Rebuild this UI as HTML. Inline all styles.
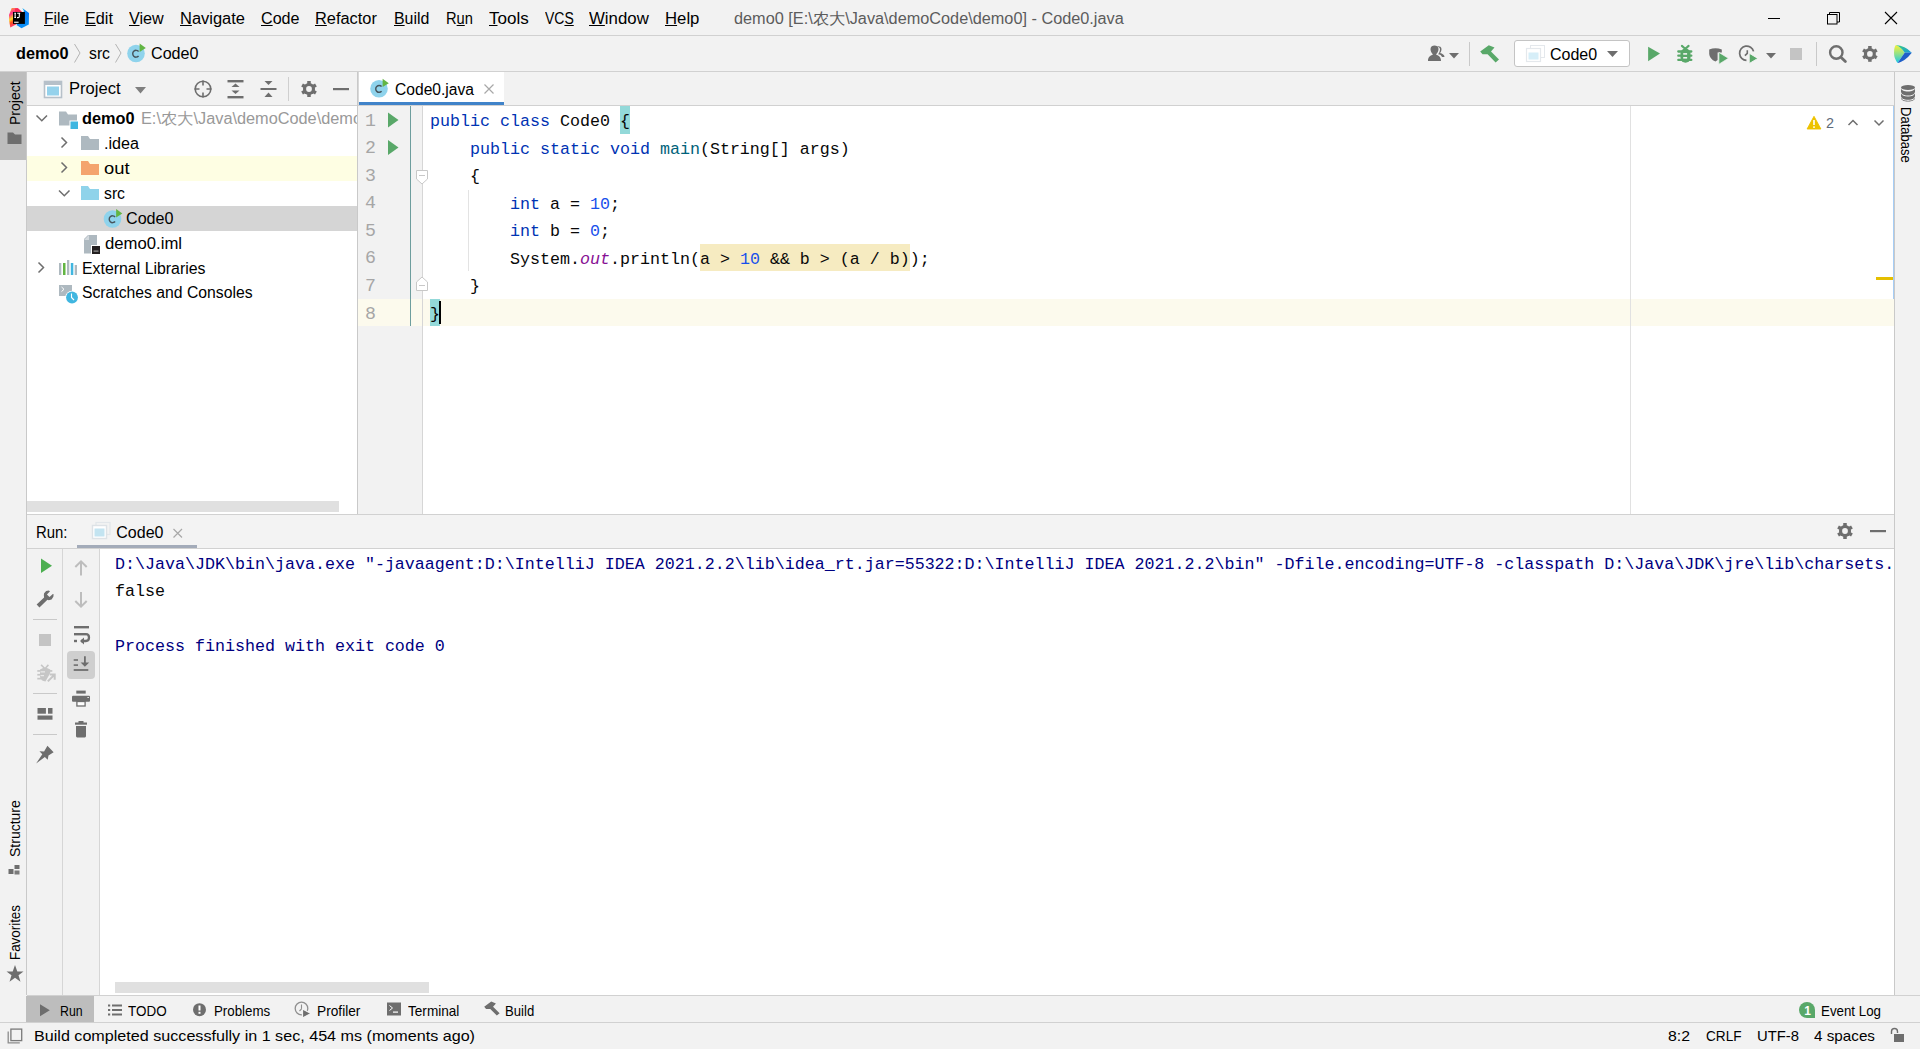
<!DOCTYPE html>
<html><head><meta charset="utf-8"><style>*{margin:0;padding:0;box-sizing:border-box}
html,body{width:1920px;height:1049px;overflow:hidden;background:#f2f2f2}
body{position:relative;font-family:"Liberation Sans",sans-serif;color:#000}
.a{position:absolute;display:block;overflow:visible}
.t{position:absolute;white-space:pre}
.vt{white-space:pre;color:#000}
.code{position:absolute;white-space:pre;font-family:"Liberation Mono",monospace;font-size:16.67px;line-height:27.57px;color:#080808}
u{text-decoration:underline;text-decoration-thickness:1px;text-underline-offset:1px}
</style></head><body>
<div class="a" style="left:0px;top:35px;width:1920px;height:1px;background:#d1d1d1;"></div>
<svg class="a" style="left:5px;top:4px" width="30" height="28" viewBox="0 0 30 28">
<defs><linearGradient id="lgb" x1="0" y1="0" x2="0.3" y2="1">
<stop offset="0" stop-color="#07c3f2"/><stop offset="0.45" stop-color="#087cfa"/><stop offset="1" stop-color="#0a8ff5"/></linearGradient>
<linearGradient id="lgp" x1="0" y1="0" x2="0.4" y2="1">
<stop offset="0" stop-color="#fcb827"/><stop offset="0.3" stop-color="#ff318c"/><stop offset="0.55" stop-color="#fcd927"/><stop offset="0.7" stop-color="#fc521f"/><stop offset="1" stop-color="#ff318c"/></linearGradient></defs>
<polygon points="17.3,4 24,9.1 23.8,20.5 16.5,24.2 11.5,21 19,7" fill="url(#lgb)"/>
<polygon points="6.7,4 12.5,4.1 17.5,8.5 11,20.5 5.3,23.5 4.2,17 4,11" fill="url(#lgp)"/>
<polygon points="10,4.5 13,4.2 17.5,8.5 10,10" fill="#fe2857"/>
<rect x="8" y="8" width="11.9" height="11.9" fill="#000"/>
<rect x="9.1" y="17.7" width="4.5" height="1.1" fill="#fff"/>
<path d="M9.3,9.2 H11 M10.15,9.2 V13.5 M9.3,13.5 H11 M12.2,9.2 H15.2 M14.3,9.2 V12.4 Q14.3,13.6 13.2,13.6 H12" fill="none" stroke="#fff" stroke-width="1.1"/>
</svg>
<svg class="a" style="left:1760px;top:0px" width="160" height="35" viewBox="0 0 160 35">
<rect x="8" y="18" width="12" height="1" fill="#000"/>
<rect x="67.5" y="14.5" width="9.5" height="9.5" fill="none" stroke="#000" stroke-width="1"/>
<path d="M69.5,14.5 V12.5 H79.5 V22 H77" fill="none" stroke="#000" stroke-width="1"/>
<path d="M125,12 L137,24 M137,12 L125,24" stroke="#000" stroke-width="1.1"/>
</svg>
<div class="a" style="left:0px;top:71px;width:1920px;height:1px;background:#d1d1d1;"></div>
<svg class="a" style="left:70px;top:40px" width="60" height="28" viewBox="0 0 60 28"><path d="M4.5,4 L10,13 L4.5,22.5" fill="none" stroke="#b4b4b4" stroke-width="1"/>
<path d="M45.5,4 L51,13 L45.5,22.5" fill="none" stroke="#b4b4b4" stroke-width="1"/></svg>
<svg class="a" style="left:120px;top:36px" width="40" height="36" viewBox="0 0 40 36"><circle cx="16" cy="17.5" r="8.8" fill="#8fd3ec"/>
<path d="M18.6,15.4 A3.4,3.4 0 1 0 18.6,20.1" fill="none" stroke="#46545c" stroke-width="1.45"/>
<polygon points="19.6,7.5 25.8,12.0 19.6,15.9" fill="#62b543"/></svg>
<svg class="a" style="left:1420px;top:36px" width="500" height="36" viewBox="0 0 500 36">
<path d="M8,25 C8,21 10,19.5 13,18.5 C11.5,17 10.5,15 10.5,13 C10.5,10.5 12.5,9.5 14.5,9.5 C16.5,9.5 18.5,10.5 18.5,13 C18.5,15 17.5,17 16,18.5 C19,19.5 21,21 21,25 Z" fill="#6e6e6e"/>
<path d="M17,10.5 C18.5,10 21.5,10.5 21.5,13 C21.5,14.5 21,16 20,17 C22.5,17.5 24.5,19 24.5,21 L22,21 C21.5,19.5 20,18.5 18,18.3 C19.3,16.8 20,15 20,13.2 C20,12 18.8,11 17,10.5Z" fill="#6e6e6e"/>
<polygon points="29,17 39,17 34,22.5" fill="#6e6e6e"/>
<rect x="49" y="6" width="1" height="24" fill="#c9c9c9"/>
<polygon points="60.2,15.5 68.8,9.2 74.5,11.5 71,15.5 79,23.5 75.6,26.4 67.6,18.3 62.5,18.3" fill="#59a869"/>
<polygon points="228.1,10.85 240,17.6 228.1,25.2" fill="#59a869"/>
</svg>
<div class="a" style="left:1514px;top:40px;width:116px;height:27px;background:#fff;border:1px solid #c4c4c4;border-radius:3px"></div>
<svg class="a" style="left:1520px;top:40px" width="110" height="27" viewBox="0 0 110 27">
<rect x="10.5" y="5.5" width="14" height="12" fill="#fff" stroke="#e4e8ec" stroke-width="1"/>
<rect x="6.5" y="8.5" width="14" height="13" fill="#fff" stroke="#e4e8ec" stroke-width="1.2"/>
<rect x="8.5" y="12.5" width="10" height="7" fill="#d6eef8"/>
<polygon points="87,11 98,11 92.5,17" fill="#6e6e6e"/>
</svg>
<svg class="a" style="left:1670px;top:36px" width="250" height="36" viewBox="0 0 250 36">
<rect x="10.5" y="12.5" width="10" height="14.2" rx="5" fill="#59a869"/>
<path d="M8.3,15.5 H21.3 M8.3,19.7 H21.3 M8.3,23.9 H21.3" stroke="#59a869" stroke-width="2.3" stroke-linecap="round"/>
<path d="M11.9,9.9 L14.9,12.5 M18.6,9.9 L15.6,12.5" stroke="#59a869" stroke-width="2.1" stroke-linecap="round"/>
<rect x="13.2" y="17.1" width="3.9" height="1.6" fill="#f2f2f2"/>
<rect x="13.2" y="21" width="3.9" height="1.6" fill="#f2f2f2"/>
<path d="M39.2,13.6 Q45.5,10.9 51.8,13.6 V16.6 H47.6 V24 L45.5,25.6 Q39.6,23 39.2,18 Z" fill="#6e6e6e"/>
<polygon points="48.9,16.4 58.4,22.3 48.9,28.2" fill="#59a869" stroke="#f2f2f2" stroke-width="0.7"/>
<path d="M83.56,15.36 A7.1,7.1 0 1 0 76.45,24.3" fill="none" stroke="#6e6e6e" stroke-width="1.7"/>
<path d="M77.3,14.2 V17.3 L74.9,19.6" fill="none" stroke="#6e6e6e" stroke-width="1.6"/>
<polygon points="79.2,17.2 87.9,22.4 79.2,27.6" fill="#59a869" stroke="#f2f2f2" stroke-width="1"/>
<polygon points="96,17 106,17 101,22.5" fill="#6e6e6e"/>
<rect x="120" y="12" width="12" height="12" fill="#c4c4c4"/>
<rect x="146" y="6" width="1" height="24" fill="#c9c9c9"/>
<circle cx="166.3" cy="16.5" r="6.2" fill="none" stroke="#6e6e6e" stroke-width="2.4"/>
<path d="M171.2,21.4 L175.4,25.6" stroke="#6e6e6e" stroke-width="2.8" stroke-linecap="round"/>
</svg>
<svg class="a" style="left:1850px;top:36px" width="70" height="36" viewBox="0 0 70 36"><circle cx="19.9" cy="17.9" r="6.00" fill="#6e6e6e"/><rect x="18.16" y="10.00" width="3.48" height="7.90" fill="#6e6e6e" transform="rotate(0 19.9 17.9)"/><rect x="18.16" y="10.00" width="3.48" height="7.90" fill="#6e6e6e" transform="rotate(60 19.9 17.9)"/><rect x="18.16" y="10.00" width="3.48" height="7.90" fill="#6e6e6e" transform="rotate(120 19.9 17.9)"/><rect x="18.16" y="10.00" width="3.48" height="7.90" fill="#6e6e6e" transform="rotate(180 19.9 17.9)"/><rect x="18.16" y="10.00" width="3.48" height="7.90" fill="#6e6e6e" transform="rotate(240 19.9 17.9)"/><rect x="18.16" y="10.00" width="3.48" height="7.90" fill="#6e6e6e" transform="rotate(300 19.9 17.9)"/><circle cx="19.9" cy="17.9" r="2.84" fill="#f2f2f2"/>
<defs><linearGradient id="tb1" x1="0" y1="0" x2="0" y2="1"><stop offset="0" stop-color="#f8f236"/><stop offset="0.5" stop-color="#8fe08a"/><stop offset="1" stop-color="#18c9ea"/></linearGradient>
<linearGradient id="tb2" x1="0" y1="0" x2="1" y2="1"><stop offset="0" stop-color="#3ed07a"/><stop offset="1" stop-color="#1597e0"/></linearGradient></defs>
<path d="M45.9,9.1 Q52,12 54.7,16.8 Q51,22 47.6,26.9 Q44,22.5 44,17 Q44,11 45.9,9.1 Z" fill="url(#tb1)"/>
<path d="M45.9,9.1 Q55,9.5 61.8,16.8 H54.7 Q52,12 45.9,9.1 Z" fill="url(#tb2)"/>
<path d="M54.7,16.8 H61.8 Q55,25.5 47.6,26.9 Q51,22 54.7,16.8 Z" fill="#1f5fc8"/>
</svg>
<div class="a" style="left:0px;top:72px;width:26px;height:88px;background:#bdbdbd;"></div>
<div class="a" style="left:26px;top:72px;width:1px;height:924px;background:#c9c9c9;"></div>
<svg class="a" style="left:0px;top:72px" width="26" height="930" viewBox="0 0 26 930">
<path d="M7.5,60.5 H13 L15,62.5 H21.5 V72 H7.5 Z" fill="#6e6e6e"/>
<rect x="8.5" y="797" width="5" height="5" fill="#6e6e6e"/>
<rect x="14.5" y="793" width="5" height="4" fill="#6e6e6e"/>
<rect x="14.5" y="798.5" width="5" height="4" fill="#6e6e6e" opacity="0.9"/>
<polygon points="15,893 17.3,899.5 23.5,899.5 18.5,903.3 20.5,909.8 15,905.8 9.5,909.8 11.5,903.3 6.5,899.5 12.7,899.5" fill="#6e6e6e"/>
</svg>
<div class="t vt" style="left:7.5px;top:124.5px;transform:rotate(-90deg);transform-origin:0 0;font-size:14px;line-height:14px">Project</div>
<div class="t vt" style="left:8px;top:857px;transform:rotate(-90deg);transform-origin:0 0;font-size:14px;line-height:14px">Structure</div>
<div class="t vt" style="left:8px;top:960px;transform:rotate(-90deg) scaleX(0.955);transform-origin:0 0;font-size:14px;line-height:14px">Favorites</div>
<div class="a" style="left:27px;top:106px;width:330px;height:408px;background:#fff;"></div>
<div class="a" style="left:27px;top:105px;width:330px;height:1px;background:#d1d1d1;"></div>
<div class="a" style="left:357px;top:72px;width:1px;height:442px;background:#c9c9c9;"></div>
<div class="a" style="left:358px;top:72px;width:1px;height:442px;background:#d9d9d9;"></div>
<svg class="a" style="left:27px;top:72px" width="330" height="34" viewBox="0 0 330 34">
<rect x="17.5" y="9.5" width="17" height="16" fill="#fff" stroke="#b6c0c9" stroke-width="1.6"/>
<rect x="17" y="9" width="18" height="4" fill="#b6c0c9"/>
<rect x="20" y="14.5" width="12" height="9" fill="#95d2ec"/>
<polygon points="108,15 119,15 113.5,21.5" fill="#7f7f7f"/>
<circle cx="176" cy="17" r="7.8" fill="none" stroke="#6e6e6e" stroke-width="1.6"/>
<path d="M167.5,17 H172.5 M179.5,17 H184.5 M176,8.5 V13.5 M176,20.5 V25.5" stroke="#6e6e6e" stroke-width="1.6"/>
<rect x="200.5" y="8" width="16" height="2.4" fill="#6e6e6e"/>
<rect x="200.5" y="24" width="16" height="2.4" fill="#6e6e6e"/>
<polygon points="204.5,15 212.5,15 208.5,11.5" fill="#6e6e6e"/>
<polygon points="204.5,18.5 212.5,18.5 208.5,22" fill="#6e6e6e"/>
<rect x="233.5" y="16" width="16" height="2" fill="#6e6e6e"/>
<polygon points="237.5,9 245.5,9 241.5,13" fill="#6e6e6e"/>
<polygon points="237.5,25 245.5,25 241.5,20.5" fill="#6e6e6e"/>
<rect x="261" y="5" width="1" height="24" fill="#cfcfcf"/>
<rect x="306" y="16" width="16" height="2.2" fill="#6e6e6e"/>
<circle cx="282" cy="17" r="6.08" fill="#6e6e6e"/><rect x="280.24" y="9.00" width="3.52" height="8.00" fill="#6e6e6e" transform="rotate(0 282 17)"/><rect x="280.24" y="9.00" width="3.52" height="8.00" fill="#6e6e6e" transform="rotate(60 282 17)"/><rect x="280.24" y="9.00" width="3.52" height="8.00" fill="#6e6e6e" transform="rotate(120 282 17)"/><rect x="280.24" y="9.00" width="3.52" height="8.00" fill="#6e6e6e" transform="rotate(180 282 17)"/><rect x="280.24" y="9.00" width="3.52" height="8.00" fill="#6e6e6e" transform="rotate(240 282 17)"/><rect x="280.24" y="9.00" width="3.52" height="8.00" fill="#6e6e6e" transform="rotate(300 282 17)"/><circle cx="282" cy="17" r="2.88" fill="#f2f2f2"/></svg>
<div class="a" style="left:27px;top:156px;width:330px;height:25px;background:#fefee3;"></div>
<div class="a" style="left:27px;top:206px;width:330px;height:25px;background:#d5d5d5;"></div>
<svg class="a" style="left:27px;top:106px" width="330" height="200" viewBox="0 0 330 200">
<path d="M9.5,9.5 L14.8,14.8 L20,9.5" fill="none" stroke="#6e6e6e" stroke-width="1.5"/>
<path d="M32,5.5 H39 L41,8.5 H50 V19.5 H32 Z" fill="#aeb9c0"/>
<rect x="42.5" y="14.5" width="9" height="9" fill="#fff"/>
<rect x="43.5" y="15.5" width="7.5" height="7.5" fill="#40b6e0"/>
<path d="M34.5,31.5 L39.5,36.5 L34.5,41.5" fill="none" stroke="#6e6e6e" stroke-width="1.5"/>
<path d="M54,30 H61 L63,33 H72 V44 H54 Z" fill="#aeb9c0"/>
<path d="M34.5,56.5 L39.5,61.5 L34.5,66.5" fill="none" stroke="#6e6e6e" stroke-width="1.5"/>
<path d="M54,55 H61 L63,58 H72 V69 H54 Z" fill="#f4a46e"/>
<path d="M32,84.5 L37.3,89.8 L42.5,84.5" fill="none" stroke="#6e6e6e" stroke-width="1.5"/>
<path d="M54,80 H61 L63,83 H72 V94 H54 Z" fill="#8fd3ea"/>
<path d="M57,129 H70 V140 H64 V147.5 H57 Z" fill="#aeb9c0"/>
<path d="M56.5,128.5 H61.5 L56.5,133.5 Z" fill="#fff"/>
<polygon points="57,134 62,129 62,134" fill="#d3d9de"/>
<rect x="64" y="139" width="10" height="10" fill="#fff"/>
<rect x="65" y="140" width="8" height="8" fill="#231f20"/>
<rect x="66.5" y="144.5" width="5" height="1.2" fill="#9a9a9a"/>
<path d="M11.5,156.5 L16.5,161.5 L11.5,166.5" fill="none" stroke="#6e6e6e" stroke-width="1.5"/>
<rect x="32" y="157" width="2.3" height="12" fill="#aeb9c0"/>
<rect x="36" y="157" width="2.5" height="12" fill="#62b543"/>
<rect x="40" y="154" width="2.3" height="15" fill="#aeb9c0"/>
<rect x="43.8" y="157" width="2.5" height="12" fill="#40b6e0"/>
<rect x="47.7" y="159" width="2.3" height="10" fill="#aeb9c0"/>
<rect x="32" y="179" width="13" height="11" fill="#aeb9c0"/>
<path d="M34.5,181 L37,183.3 L34.5,185.6" fill="none" stroke="#fff" stroke-width="1"/>
<circle cx="45" cy="191.5" r="6.8" fill="#fff"/>
<circle cx="45" cy="191.5" r="5.9" fill="#40b6e0"/>
<path d="M44.5,187.5 V191.5 L47,194" fill="none" stroke="#fff" stroke-width="1.1"/>
</svg>
<svg class="a" style="left:100px;top:200px" width="40" height="40" viewBox="0 0 40 40"><circle cx="12.5" cy="19" r="8.8" fill="#8fd3ec"/>
<path d="M15.1,16.9 A3.4,3.4 0 1 0 15.1,21.6" fill="none" stroke="#46545c" stroke-width="1.45"/>
<polygon points="16.1,9 22.3,13.5 16.1,17.4" fill="#62b543"/></svg>
<div class="a" style="left:27px;top:500px;width:314px;height:13px;background:#fff;"></div>
<div class="a" style="left:27px;top:501px;width:312px;height:11px;background:#e0e0e0;"></div>
<div class="a" style="left:359px;top:72px;width:145px;height:33px;background:#fff;"></div>
<div class="a" style="left:359px;top:102px;width:145px;height:3px;background:#4083c9;"></div>
<div class="a" style="left:358px;top:105px;width:1536px;height:1px;background:#d1d1d1;"></div>
<svg class="a" style="left:360px;top:72px" width="144" height="33" viewBox="0 0 144 33"><circle cx="19" cy="16.7" r="8.8" fill="#8fd3ec"/>
<path d="M21.6,14.6 A3.4,3.4 0 1 0 21.6,19.3" fill="none" stroke="#46545c" stroke-width="1.45"/>
<polygon points="22.6,6.699999999999999 28.8,11.2 22.6,15.1" fill="#62b543"/>
<path d="M124.5,12.5 L133.5,21.5 M133.5,12.5 L124.5,21.5" stroke="#a8a8a8" stroke-width="1.2"/></svg>
<div class="a" style="left:358px;top:106px;width:1536px;height:408px;background:#fff;"></div>
<div class="a" style="left:358px;top:106px;width:64px;height:408px;background:#f2f2f2;"></div>
<div class="a" style="left:358px;top:299px;width:1536px;height:27px;background:#fcfaed;"></div>
<div class="a" style="left:410px;top:106px;width:1px;height:220px;background:#6e9e9e;"></div>
<div class="a" style="left:422px;top:106px;width:1px;height:408px;background:#d6d6d6;"></div>
<div class="a" style="left:1630px;top:106px;width:1px;height:408px;background:#e1e1e1;"></div>
<div class="a" style="left:1893px;top:106px;width:1px;height:193px;background:#a6cdf5;"></div>
<div class="a" style="left:1876px;top:276.5px;width:17px;height:3px;background:#e5bf00;"></div>
<div class="a" style="left:620px;top:106px;width:10px;height:27.5px;background:#93d9d9;"></div>
<div class="a" style="left:430px;top:299px;width:10px;height:27px;background:#93d9d9;"></div>
<div class="a" style="left:700px;top:244px;width:210px;height:27px;background:#f6ebc1;"></div>
<div class="a" style="left:439px;top:301px;width:2px;height:23px;background:#000;"></div>
<div class="a" style="left:468px;top:190px;width:1px;height:81px;background:#e3e3e3;"></div>
<svg class="a" style="left:358px;top:106px" width="64" height="220" viewBox="0 0 64 220">
<polygon points="30,6.5 40.5,14 30,21.5" fill="#59a869"/>
<polygon points="30,34 40.5,41.5 30,49" fill="#59a869"/>
</svg>
<svg class="a" style="left:410px;top:160px" width="24" height="140" viewBox="0 0 24 140">
<path d="M6.5,10.5 H17.5 V19 L12,24 L6.5,19 Z" fill="#fff" stroke="#c8c8c8" stroke-width="1"/>
<rect x="9" y="15" width="6" height="1" fill="#c8c8c8"/>
<path d="M6.5,130.5 H17.5 V122 L12,117 L6.5,122 Z" fill="#fff" stroke="#c8c8c8" stroke-width="1"/>
<rect x="9" y="125" width="6" height="1" fill="#c8c8c8"/>
</svg>
<div class="code" style="left:430px;top:108.00px"><span style="color:#0033b3">public class </span><span style="color:#080808">Code0 </span><span style="color:#080808">{</span></div>
<div class="code" style="left:365px;top:107.60px;color:#a6a6a6;font-size:18.2px;line-height:27.57px">1</div>
<div class="code" style="left:430px;top:135.57px"><span style="color:#080808">    </span><span style="color:#0033b3">public static void </span><span style="color:#00627a">main</span><span style="color:#080808">(String[] args)</span></div>
<div class="code" style="left:365px;top:135.17px;color:#a6a6a6;font-size:18.2px;line-height:27.57px">2</div>
<div class="code" style="left:430px;top:163.14px"><span style="color:#080808">    {</span></div>
<div class="code" style="left:365px;top:162.74px;color:#a6a6a6;font-size:18.2px;line-height:27.57px">3</div>
<div class="code" style="left:430px;top:190.71px"><span style="color:#080808">        </span><span style="color:#0033b3">int </span><span style="color:#080808">a = </span><span style="color:#1750eb">10</span><span style="color:#080808">;</span></div>
<div class="code" style="left:365px;top:190.31px;color:#a6a6a6;font-size:18.2px;line-height:27.57px">4</div>
<div class="code" style="left:430px;top:218.28px"><span style="color:#080808">        </span><span style="color:#0033b3">int </span><span style="color:#080808">b = </span><span style="color:#1750eb">0</span><span style="color:#080808">;</span></div>
<div class="code" style="left:365px;top:217.88px;color:#a6a6a6;font-size:18.2px;line-height:27.57px">5</div>
<div class="code" style="left:430px;top:245.85px"><span style="color:#080808">        System.</span><span style="color:#871094;font-style:italic">out</span><span style="color:#080808">.println(a &gt; </span><span style="color:#1750eb">10</span><span style="color:#080808"> &amp;&amp; b &gt; (a / b));</span></div>
<div class="code" style="left:365px;top:245.45px;color:#a6a6a6;font-size:18.2px;line-height:27.57px">6</div>
<div class="code" style="left:430px;top:273.42px"><span style="color:#080808">    }</span></div>
<div class="code" style="left:365px;top:273.02px;color:#a6a6a6;font-size:18.2px;line-height:27.57px">7</div>
<div class="code" style="left:430px;top:300.99px"><span style="color:#080808">}</span></div>
<div class="code" style="left:365px;top:300.59px;color:#a6a6a6;font-size:18.2px;line-height:27.57px">8</div>
<svg class="a" style="left:1800px;top:110px" width="95" height="24" viewBox="0 0 95 24">
<polygon points="14,6.3 20.9,19 7.1,19" fill="#edc200" stroke="#edc200" stroke-width="0.9" stroke-linejoin="round"/>
<rect x="13.2" y="10" width="1.6" height="5" fill="#fff"/>
<rect x="13.2" y="16.3" width="1.6" height="1.6" fill="#fff"/>
<path d="M48.5,15 L53,10.5 L57.5,15" fill="none" stroke="#6e6e6e" stroke-width="1.5"/>
<path d="M74.5,10.5 L79,15 L83.5,10.5" fill="none" stroke="#6e6e6e" stroke-width="1.5"/>
</svg>
<div class="a" style="left:1894px;top:72px;width:1px;height:924px;background:#c9c9c9;"></div>
<svg class="a" style="left:1895px;top:72px" width="25" height="40" viewBox="0 0 25 40">
<ellipse cx="13" cy="15.5" rx="7" ry="2.6" fill="#6e6e6e"/>
<path d="M6,16 V26 C6,28 9,29.5 13,29.5 C17,29.5 20,28 20,26 V16 C20,18 17,19.5 13,19.5 C9,19.5 6,18 6,16Z" fill="#6e6e6e"/>
<path d="M6,20.5 C6,22.5 9,24 13,24 C17,24 20,22.5 20,20.5 M6,24.8 C6,26.8 9,28.3 13,28.3 C17,28.3 20,26.8 20,24.8" fill="none" stroke="#f2f2f2" stroke-width="1"/>
</svg>
<div class="t vt" style="left:1912.7px;top:106.5px;transform:rotate(90deg) scaleX(0.93);transform-origin:0 0;font-size:14px;line-height:14px">Database</div>
<div class="a" style="left:27px;top:514px;width:1867px;height:1px;background:#d1d1d1;"></div>
<div class="a" style="left:27px;top:515px;width:1867px;height:33px;background:#f3f3f3;"></div>
<div class="a" style="left:27px;top:548px;width:1867px;height:1px;background:#d1d1d1;"></div>
<div class="a" style="left:76.5px;top:545px;width:120px;height:3px;background:#a3abb9;"></div>
<svg class="a" style="left:88px;top:518px" width="100" height="26" viewBox="0 0 100 26">
<rect x="8" y="4.5" width="14" height="12" fill="none" stroke="#e2e6ea" stroke-width="1.2"/>
<rect x="4.5" y="7.5" width="14" height="13" fill="#fff" stroke="#dde2e6" stroke-width="1.4"/>
<rect x="6.5" y="10.5" width="10" height="8" fill="#c3e4f1"/>
<path d="M85.5,11 L94,19.5 M94,11 L85.5,19.5" stroke="#a8a8a8" stroke-width="1.2"/>
</svg>
<svg class="a" style="left:1830px;top:515px" width="64" height="33" viewBox="0 0 64 33"><circle cx="15" cy="16" r="6.08" fill="#6e6e6e"/><rect x="13.24" y="8.00" width="3.52" height="8.00" fill="#6e6e6e" transform="rotate(0 15 16)"/><rect x="13.24" y="8.00" width="3.52" height="8.00" fill="#6e6e6e" transform="rotate(60 15 16)"/><rect x="13.24" y="8.00" width="3.52" height="8.00" fill="#6e6e6e" transform="rotate(120 15 16)"/><rect x="13.24" y="8.00" width="3.52" height="8.00" fill="#6e6e6e" transform="rotate(180 15 16)"/><rect x="13.24" y="8.00" width="3.52" height="8.00" fill="#6e6e6e" transform="rotate(240 15 16)"/><rect x="13.24" y="8.00" width="3.52" height="8.00" fill="#6e6e6e" transform="rotate(300 15 16)"/><circle cx="15" cy="16" r="2.88" fill="#f2f2f2"/><rect x="40" y="15" width="16" height="2.2" fill="#6e6e6e"/></svg>
<div class="a" style="left:62px;top:549px;width:1px;height:446px;background:#d6d6d6;"></div>
<div class="a" style="left:99px;top:549px;width:1px;height:446px;background:#d6d6d6;"></div>
<div class="a" style="left:100px;top:549px;width:1794px;height:446px;background:#fff;"></div>
<div class="a" style="left:67px;top:651px;width:28px;height:28px;background:#cfcfcf;border-radius:4px"></div>
<svg class="a" style="left:27px;top:549px" width="73" height="446" viewBox="0 0 73 446">
<polygon points="14,9.5 25,16.8 14,24" fill="#4caf50"/>
<polygon points="9.63,55.56 12.46,58.39 20.44,50.80 21.73,51.18 24.56,50.41 26.36,47.84 26.62,45.26 25.84,45.01 22.50,48.09 19.93,45.52 23.01,42.18 21.73,41.53 19.15,41.92 17.09,44.23 16.84,46.29 17.09,48.61" fill="#6e6e6e"/>
<rect x="6" y="70" width="24" height="1" fill="#c9c9c9"/>
<rect x="12" y="85" width="12" height="12" fill="#c4c4c4"/>
<g fill="#c6c6c6">
<path d="M14.100000000000001,115.89999999999998 L18,119.70000000000005 L21.4,115.89999999999998" fill="none" stroke="#c6c6c6" stroke-width="1.6"/>
<path d="M13,120.5 Q18,117 23.200000000000003,120.5 V124 L18.5,132.60000000000002 Q14,132 13,128 Z"/>
<rect x="10.299999999999997" y="121.10000000000002" width="15" height="1.7"/>
<rect x="10.299999999999997" y="124.89999999999998" width="4" height="1.7"/>
<rect x="10.299999999999997" y="128.79999999999995" width="4" height="1.7"/>
</g>
<path d="M13.5,122.89999999999998 H18 M13.5,126.70000000000005 H17" stroke="#f2f2f2" stroke-width="1"/>
<path d="M20.799999999999997,132.39999999999998 L27.4,125.79999999999995 M22.700000000000003,125.5 H27.700000000000003 V130.79999999999995" fill="none" stroke="#c6c6c6" stroke-width="2"/>
<path d="M17,134 L26,125" stroke="#f2f2f2" stroke-width="1" opacity="0"/>
<rect x="6" y="144" width="24" height="1" fill="#c9c9c9"/>
<rect x="10.5" y="159" width="8.4" height="5.7" fill="#6e6e6e"/>
<rect x="21" y="159" width="4.5" height="5.7" fill="#6e6e6e"/>
<rect x="10.5" y="166.5" width="15" height="4.2" fill="#6e6e6e"/>
<rect x="6" y="185" width="24" height="1" fill="#c9c9c9"/>
<polygon points="20.44,196.86 26.62,203.29 21.47,206.38 20.70,210.76 17.87,207.93 9.12,214.62 15.29,205.35 12.46,202.26 17.09,202.52" fill="#6e6e6e"/>
<path d="M54,12.5 V26.5 M48.3,18 L54,12.3 L59.7,18" fill="none" stroke="#bdbdbd" stroke-width="2"/>
<path d="M54,43 V57.5 M48.3,52 L54,57.7 L59.7,52" fill="none" stroke="#bdbdbd" stroke-width="2"/>
<rect x="47" y="77" width="15" height="2.4" fill="#6e6e6e"/>
<rect x="47" y="84" width="12" height="2.4" fill="#6e6e6e"/>
<path d="M59,85.2 C63,85.2 63,92 59,92 H54" fill="none" stroke="#6e6e6e" stroke-width="2.3"/>
<polygon points="53,92 57,88.5 57,95.5" fill="#6e6e6e"/>
<rect x="47" y="90.8" width="3" height="2.4" fill="#6e6e6e"/>
<rect x="46.7" y="110.20000000000005" width="4.3" height="1.6" fill="#6e6e6e"/>
<rect x="46.7" y="115.29999999999995" width="4.3" height="1.6" fill="#6e6e6e"/>
<rect x="46.7" y="120.10000000000002" width="14.6" height="1.8" fill="#6e6e6e"/>
<path d="M57.900000000000006,107.20000000000005 V114" stroke="#6e6e6e" stroke-width="1.8"/>
<polygon points="53.599999999999994,113.60000000000002 62.2,113.60000000000002 57.900000000000006,117.79999999999995" fill="#6e6e6e"/>
<rect x="49.3" y="141.60000000000002" width="9.4" height="3" fill="#6e6e6e"/>
<rect x="45" y="146.70000000000005" width="18" height="6" rx="1" fill="#6e6e6e"/>
<rect x="49.900000000000006" y="152.5" width="8.2" height="4.5" fill="#fff" stroke="#6e6e6e" stroke-width="1.3"/>
<rect x="60.5" y="148" width="1.3" height="1" fill="#fff"/>
<rect x="48" y="173.5" width="12" height="2.2" fill="#6e6e6e"/>
<rect x="51.5" y="172" width="5" height="2" fill="#6e6e6e"/>
<path d="M49,177 H59 V187 C59,188 58,188.5 57,188.5 H51 C50,188.5 49,188 49,187 Z" fill="#6e6e6e"/>
</svg>
<div class="code" style="left:115px;top:550.8px;color:#000080;width:1779px;overflow:hidden">D:\Java\JDK\bin\java.exe &quot;-javaagent:D:\IntelliJ IDEA 2021.2.2\lib\idea_rt.jar=55322:D:\IntelliJ IDEA 2021.2.2\bin&quot; -Dfile.encoding=UTF-8 -classpath D:\Java\JDK\jre\lib\charsets.</div>
<div class="code" style="left:115px;top:577.87px;color:#080808">false</div>
<div class="code" style="left:115px;top:633.21px;color:#000080">Process finished with exit code 0</div>
<div class="a" style="left:115px;top:982px;width:314px;height:11px;background:#e0e0e0;"></div>
<div class="a" style="left:27px;top:995px;width:1893px;height:1px;background:#d1d1d1;"></div>
<div class="a" style="left:0px;top:995px;width:27px;height:1px;background:#f2f2f2;"></div>
<div class="a" style="left:26px;top:996px;width:68px;height:26px;background:#bdbdbd;"></div>
<div class="a" style="left:0px;top:1022px;width:1920px;height:1px;background:#d1d1d1;"></div>
<svg class="a" style="left:27px;top:995.4px" width="560" height="26" viewBox="0 0 560 26">
<polygon points="13,9.2 22.8,15.3 13,21.3" fill="#6e6e6e"/>
<rect x="81" y="9.5" width="2.2" height="2" fill="#6e6e6e"/><rect x="85" y="9.5" width="10" height="2" fill="#6e6e6e"/>
<rect x="81" y="14" width="2.2" height="2" fill="#6e6e6e"/><rect x="85" y="14" width="10" height="2" fill="#6e6e6e"/>
<rect x="81" y="18.5" width="2.2" height="2" fill="#6e6e6e"/><rect x="85" y="18.5" width="10" height="2" fill="#6e6e6e"/>
<circle cx="172.5" cy="14.7" r="6.5" fill="#6e6e6e"/>
<rect x="171.5" y="10.5" width="2" height="5" fill="#fff"/><rect x="171.5" y="16.8" width="2" height="2" fill="#fff"/>
<circle cx="274.5" cy="13.5" r="6.3" fill="none" stroke="#6e6e6e" stroke-width="1.3" opacity="0.75"/>
<path d="M274.5,9.5 V14 L272.5,16" fill="none" stroke="#6e6e6e" stroke-width="1.1" opacity="0.75"/>
<polygon points="275.5,14 284,18.5 275.5,23" fill="#6e6e6e" stroke="#f2f2f2" stroke-width="1.2"/>
<rect x="360" y="7.5" width="14" height="13" fill="#6e6e6e"/>
<path d="M362.5,10.5 L365.5,13 L362.5,15.5" fill="none" stroke="#fff" stroke-width="1"/>
<rect x="366" y="16.5" width="5" height="1.2" fill="#fff"/>
<g transform="translate(457.2,6.5) scale(0.82) translate(-60.2,-9.2)"><polygon points="60.2,15.5 68.8,9.2 74.5,11.5 71,15.5 79,23.5 75.6,26.4 67.6,18.3 62.5,18.3" fill="#6e6e6e"/></g>
</svg>
<svg class="a" style="left:1795px;top:997.6px" width="25" height="24" viewBox="0 0 25 24"><path d="M12,4 A8,8 0 1 0 12,20 H20 V12 A8,8 0 0 0 12,4 Z" fill="#59a869"/>
<text x="9.3" y="16.8" font-family="Liberation Sans" font-size="12" font-weight="700" fill="#fff">1</text></svg>
<svg class="a" style="left:0px;top:1023px" width="40" height="26" viewBox="0 0 40 26"><rect x="10.9" y="6.1" width="10.8" height="11.5" fill="none" stroke="#7a7a7a" stroke-width="1.3"/>
<path d="M8.2,8.5 V19.8 H19.8" fill="none" stroke="#8c8c8c" stroke-width="1.3"/></svg>
<svg class="a" style="left:1885px;top:1023px" width="35" height="26" viewBox="0 0 35 26"><path d="M6.5,11 V8.5 C6.5,6.5 8,5.5 9.5,5.5 C11,5.5 12.5,6.5 12.5,8.5 V10" fill="none" stroke="#6e6e6e" stroke-width="1.4"/>
<rect x="9" y="11" width="10" height="8" fill="#6e6e6e"/></svg>
<div class="t" style="left:44px;top:10.75px;font-size:16px;line-height:16px;color:#000;transform:scaleX(0.9697);transform-origin:0 0;"><u>F</u>ile</div>
<div class="t" style="left:85px;top:10.75px;font-size:16px;line-height:16px;color:#000;transform:scaleX(1.0153);transform-origin:0 0;"><u>E</u>dit</div>
<div class="t" style="left:129px;top:10.75px;font-size:16px;line-height:16px;color:#000;transform:scaleX(1.0104);transform-origin:0 0;"><u>V</u>iew</div>
<div class="t" style="left:180px;top:10.75px;font-size:16px;line-height:16px;color:#000;transform:scaleX(1.0292);transform-origin:0 0;"><u>N</u>avigate</div>
<div class="t" style="left:261.25px;top:10.75px;font-size:16px;line-height:16px;color:#000;transform:scaleX(1.0065);transform-origin:0 0;"><u>C</u>ode</div>
<div class="t" style="left:315px;top:10.75px;font-size:16px;line-height:16px;color:#000;transform:scaleX(1.0237);transform-origin:0 0;"><u>R</u>efactor</div>
<div class="t" style="left:394px;top:10.75px;font-size:16px;line-height:16px;color:#000;transform:scaleX(0.9950);transform-origin:0 0;"><u>B</u>uild</div>
<div class="t" style="left:445.6px;top:10.75px;font-size:16px;line-height:16px;color:#000;transform:scaleX(0.9162);transform-origin:0 0;">R<u>u</u>n</div>
<div class="t" style="left:489px;top:10.75px;font-size:16px;line-height:16px;color:#000;transform:scaleX(1.0640);transform-origin:0 0;"><u>T</u>ools</div>
<div class="t" style="left:545px;top:10.75px;font-size:16px;line-height:16px;color:#000;transform:scaleX(0.8737);transform-origin:0 0;">VC<u>S</u></div>
<div class="t" style="left:589px;top:10.75px;font-size:16px;line-height:16px;color:#000;transform:scaleX(1.0500);transform-origin:0 0;"><u>W</u>indow</div>
<div class="t" style="left:665px;top:10.75px;font-size:16px;line-height:16px;color:#000;transform:scaleX(1.0454);transform-origin:0 0;"><u>H</u>elp</div>
<div class="t" style="left:734px;top:10.75px;font-size:16px;line-height:16px;color:#5c5c5c;transform:scaleX(1.0167);transform-origin:0 0;">demo0 [E:\农大\Java\demoCode\demo0] - Code0.java</div>
<div class="t" style="left:15.5px;top:45.85px;font-size:16px;line-height:16px;color:#000;font-weight:700;transform:scaleX(1.0179);transform-origin:0 0;">demo0</div>
<div class="t" style="left:89px;top:45.85px;font-size:16px;line-height:16px;color:#000;transform:scaleX(0.9846);transform-origin:0 0;">src</div>
<div class="t" style="left:150.5px;top:45.85px;font-size:16px;line-height:16px;color:#000;transform:scaleX(1.0073);transform-origin:0 0;">Code0</div>
<div class="t" style="left:1550px;top:46.75px;font-size:16px;line-height:16px;color:#000;">Code0</div>
<div class="t" style="left:68.5px;top:81.35px;font-size:16px;line-height:16px;color:#000;transform:scaleX(1.0342);transform-origin:0 0;">Project</div>
<div class="t" style="left:81.5px;top:110.75px;font-size:16px;line-height:16px;color:#000;font-weight:700;transform:scaleX(1.0179);transform-origin:0 0;">demo0</div>
<div class="a" style="left:0;top:0;width:357px;height:1049px;overflow:hidden"><div class="t" style="left:141px;top:110.75px;font-size:16px;line-height:16px;color:#999999;transform:scaleX(1.0182);transform-origin:0 0;">E:\农大\Java\demoCode\demo0</div></div>
<div class="t" style="left:104px;top:135.75px;font-size:16px;line-height:16px;color:#000;transform:scaleX(1.0086);transform-origin:0 0;">.idea</div>
<div class="t" style="left:104px;top:160.75px;font-size:16px;line-height:16px;color:#000;transform:scaleX(1.1461);transform-origin:0 0;">out</div>
<div class="t" style="left:104px;top:185.75px;font-size:16px;line-height:16px;color:#000;transform:scaleX(0.9846);transform-origin:0 0;">src</div>
<div class="t" style="left:126px;top:211.35px;font-size:16px;line-height:16px;color:#000;transform:scaleX(1.0073);transform-origin:0 0;">Code0</div>
<div class="t" style="left:104.5px;top:235.85px;font-size:16px;line-height:16px;color:#000;transform:scaleX(1.0432);transform-origin:0 0;">demo0.iml</div>
<div class="t" style="left:81.5px;top:260.50px;font-size:16px;line-height:16px;color:#000;transform:scaleX(0.9920);transform-origin:0 0;">External Libraries</div>
<div class="t" style="left:81.5px;top:285.25px;font-size:16px;line-height:16px;color:#000;transform:scaleX(0.9831);transform-origin:0 0;">Scratches and Consoles</div>
<div class="t" style="left:394.5px;top:81.65px;font-size:16px;line-height:16px;color:#000;transform:scaleX(0.9759);transform-origin:0 0;">Code0.java</div>
<div class="t" style="left:1825.5px;top:115.20px;font-size:15px;line-height:15px;color:#5e6a7a;transform:scaleX(0.9588);transform-origin:0 0;">2</div>
<div class="t" style="left:35.5px;top:524.55px;font-size:16px;line-height:16px;color:#000;transform:scaleX(0.9320);transform-origin:0 0;">Run:</div>
<div class="t" style="left:116.3px;top:524.55px;font-size:16px;line-height:16px;color:#000;">Code0</div>
<div class="t" style="left:59.6px;top:1002.60px;font-size:15px;line-height:15px;color:#000;transform:scaleX(0.8209);transform-origin:0 0;">Run</div>
<div class="t" style="left:128.2px;top:1002.60px;font-size:15px;line-height:15px;color:#000;transform:scaleX(0.8964);transform-origin:0 0;">TODO</div>
<div class="t" style="left:213.5px;top:1002.60px;font-size:15px;line-height:15px;color:#000;transform:scaleX(0.8870);transform-origin:0 0;">Problems</div>
<div class="t" style="left:316.5px;top:1002.60px;font-size:15px;line-height:15px;color:#000;transform:scaleX(0.9134);transform-origin:0 0;">Profiler</div>
<div class="t" style="left:408.3px;top:1002.60px;font-size:15px;line-height:15px;color:#000;transform:scaleX(0.9067);transform-origin:0 0;">Terminal</div>
<div class="t" style="left:505.3px;top:1002.60px;font-size:15px;line-height:15px;color:#000;transform:scaleX(0.8753);transform-origin:0 0;">Build</div>
<div class="t" style="left:1820.5px;top:1002.60px;font-size:15px;line-height:15px;color:#000;transform:scaleX(0.8881);transform-origin:0 0;">Event Log</div>
<div class="t" style="left:34px;top:1028.10px;font-size:15px;line-height:15px;color:#000;transform:scaleX(1.0751);transform-origin:0 0;">Build completed successfully in 1 sec, 454 ms (moments ago)</div>
<div class="t" style="left:1668px;top:1028.10px;font-size:15px;line-height:15px;color:#000;transform:scaleX(1.0547);transform-origin:0 0;">8:2</div>
<div class="t" style="left:1705.5px;top:1028.10px;font-size:15px;line-height:15px;color:#000;transform:scaleX(0.9063);transform-origin:0 0;">CRLF</div>
<div class="t" style="left:1756.5px;top:1028.10px;font-size:15px;line-height:15px;color:#000;transform:scaleX(0.9882);transform-origin:0 0;">UTF-8</div>
<div class="t" style="left:1814px;top:1028.10px;font-size:15px;line-height:15px;color:#000;transform:scaleX(1.0159);transform-origin:0 0;">4 spaces</div>
</body></html>
